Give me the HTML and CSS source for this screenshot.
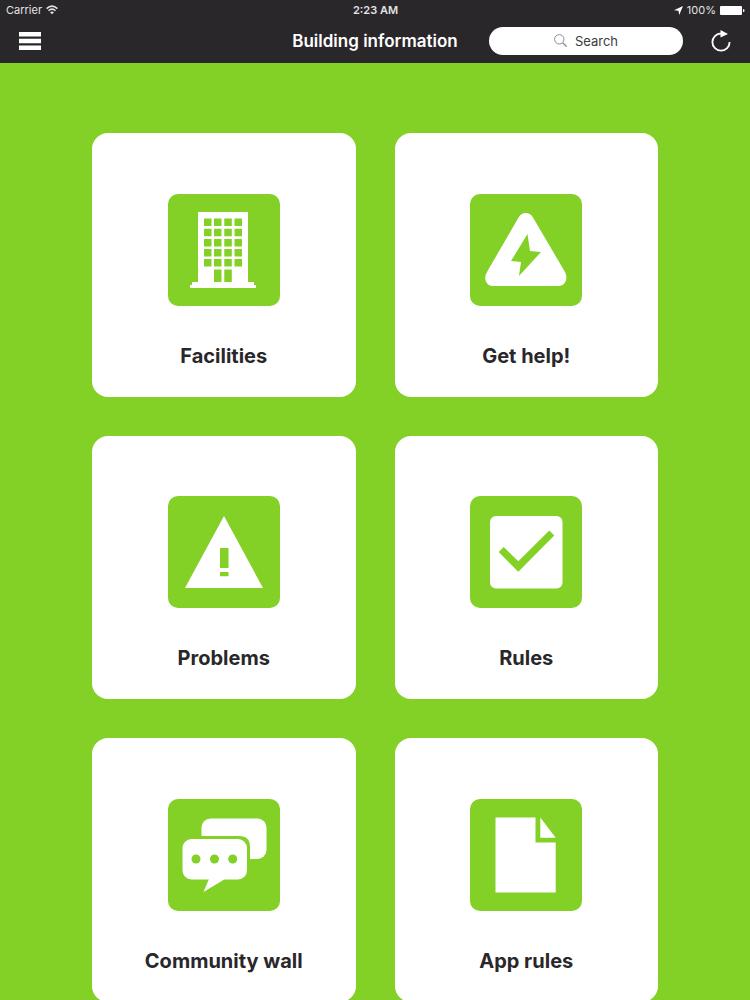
FILE: index.html
```html
<!DOCTYPE html>
<html lang="en">
<head>
<meta charset="UTF-8">
<meta name="viewport" content="width=device-width, initial-scale=1.0">
<title>Building information</title>
<link rel="stylesheet" href="styles.css">
</head>
<body>

<header class="header">
  <div class="status">
    <div class="status-left">
      <span>Carrier</span>
      <svg width="12" height="10" viewBox="0 0 12 10" fill="none" stroke="currentColor" stroke-width="1.5">
        <path d="M.6 3.6Q6-1.400 11.400 3.600M2.500 5.700Q6 2.500 9.500 5.700"/>
        <path d="M6 9.200L4 7.200Q6 5.600 8 7.200Z" fill="currentColor" stroke="none"/>
      </svg>
    </div>
    <span class="status-time">2:23 AM</span>
    <div class="status-right">
      <svg class="location" width="9" height="9" viewBox="0 0 8 8"><path d="M8 0L4.600 8L4 4.200L0 3.800Z"/></svg>
      <span>100%</span>
      <svg class="battery" width="25" height="9" viewBox="0 0 25 9"><rect width="22" height="9" rx="1"/><path d="M23 3Q24.500 3 24.500 4.500T23 6Z"/></svg>
    </div>
  </div>
  <div class="navbar">
    <button class="icon-button" type="button" aria-label="Menu">
      <svg width="22" height="18" viewBox="0 0 22 18" fill="currentColor"><path d="M0 0h22v4.500H0zM0 6.800h22v4.400H0zM0 13.500h22V18H0z"/></svg>
    </button>
    <h1 class="title">Building information</h1>
    <div class="tools">
      <label class="search">
        <svg width="13" height="13" viewBox="0 0 13 13" fill="none" stroke="currentColor"><circle cx="5.300" cy="5.300" r="4.700"/><path d="M8.700 8.700L12.600 12.600" stroke-width="1.400"/></svg>
        <input type="text" placeholder="Search" aria-label="Search">
      </label>
      <button class="icon-button" type="button" aria-label="Refresh">
        <svg width="20" height="22" viewBox="0 0 20 22" fill="none" stroke="currentColor" stroke-width="1.800"><path d="M11 3.500H10A8.600 8.600 0 1 0 18.600 12"/><path d="M9.500 0L17 4L9.500 7.500Z" fill="currentColor" stroke="none"/></svg>
      </button>
    </div>
  </div>
</header>

<main class="content">
  <nav class="grid">
    <a class="card" href="#facilities">
      <svg class="icon" viewBox="0 0 112 112">
        <path class="shape" d="M30 18H80V88H86V91H88V94H22V91H24V88H30Z"/>
        <path class="cutout" d="M36 24.500h7.500v7.500h-7.500zm10 0h7.500v7.500h-7.500zm10.300 0h7.500v7.500h-7.500zm10.200 0h7.500v7.500h-7.500zM36 34.700h7.500v7.500h-7.500zm10 0h7.500v7.500h-7.500zm10.300 0h7.500v7.500h-7.500zm10.200 0h7.500v7.500h-7.500zM36 44.900h7.500v7.500h-7.500zm10 0h7.500v7.500h-7.500zm10.300 0h7.500v7.500h-7.500zm10.200 0h7.500v7.500h-7.500zM36 55h7.500v7.500h-7.500zm10 0h7.500v7.500h-7.500zm10.300 0h7.500v7.500h-7.500zm10.200 0h7.500v7.500h-7.500zM36 65h7.500v7.500h-7.500zm10 0h7.500v7.500h-7.500zm10.300 0h7.500v7.500h-7.500zm10.200 0h7.500v7.500h-7.500zM46 75.500h7.500V88h-7.500zm10.300 0h7.500V88h-7.500z"/>
      </svg>
      <span class="label">Facilities</span>
    </a>
    <a class="card" href="#help">
      <svg class="icon" viewBox="0 0 112 112">
        <path class="shape" d="M48.500 23.500Q51 19 55.800 19T63 23.500L95 78Q97.500 83 95.500 87.500T88 92H23Q18 92 16 87.500T17 78Z"/>
        <path class="cutout" d="M57.500 40L41 67L51 68L49 82L71 58L60 57Z"/>
      </svg>
      <span class="label">Get help!</span>
    </a>
    <a class="card" href="#problems">
      <svg class="icon" viewBox="0 0 112 112">
        <path class="shape" d="M56 20L95 92H17Z"/>
        <path class="cutout" d="M52 52h8.500v20H52zM52 76h8.500v4.300H52z"/>
      </svg>
      <span class="label">Problems</span>
    </a>
    <a class="card" href="#rules">
      <svg class="icon" viewBox="0 0 112 112">
        <rect class="shape" x="20" y="20" width="72.500" height="72.500" rx="6"/>
        <path class="cutout" d="M28.700 56L33.700 51L48.300 65.200L79.300 34.500L84.300 39.500L48.300 75.800Z"/>
      </svg>
      <span class="label">Rules</span>
    </a>
    <a class="card" href="#community">
      <svg class="icon" viewBox="0 0 112 112">
        <rect class="shape" x="33.500" y="19.500" width="65" height="40.500" rx="9"/>
        <path class="cutout" d="M11 37H71Q82 37 82 48V83H11Z"/>
        <rect class="shape" x="14.500" y="40" width="64.500" height="40.500" rx="9"/>
        <path class="shape" d="M41 80L35.500 93L57 80Z"/>
        <circle class="cutout" cx="28" cy="60" r="4.500"/>
        <circle class="cutout" cx="46.500" cy="60" r="4.500"/>
        <circle class="cutout" cx="64.700" cy="60" r="4.500"/>
      </svg>
      <span class="label">Community wall</span>
    </a>
    <a class="card" href="#app-rules">
      <svg class="icon" viewBox="0 0 112 112">
        <path class="shape" d="M25.500 18.500H65.500V43.500H85.700V93.500H25.500ZM70.300 18.500L85.700 38.800H70.300Z"/>
      </svg>
      <span class="label">App rules</span>
    </a>
  </nav>
</main>

</body>
</html>
```
FILE: styles.css
```css
* {
  box-sizing: border-box;
}
body {
  display: flex;
  flex-direction: column;
  height: 100vh;
  margin: 0;
  font-family: Inter, sans-serif;
  background-color: #83d027;
}
svg {
  display: block;
  flex: none;
}
.header {
  flex: none;
  color: #fff;
  background-color: #2a272b;
}
.status,
.navbar {
  display: grid;
  grid-template-columns: 1fr auto 1fr;
  align-items: center;
}
.status {
  height: 20px;
  padding: 0 5px 0 6px;
  font-size: 11px;
  color: #e4e4e4;
}
.status-left,
.status-right {
  display: flex;
  align-items: center;
  gap: 4px;
}
.status-right {
  justify-content: flex-end;
}
.status-time {
  font-weight: 600;
}
.location,
.battery {
  fill: #fff;
}
.navbar {
  height: 43px;
  padding: 0 19px 2px;
}
.title {
  margin: 0;
  font-size: 17px;
  font-weight: 600;
}
.tools {
  display: flex;
  align-items: center;
  justify-content: flex-end;
  gap: 28px;
}
.icon-button {
  justify-self: start;
  padding: 0;
  border: none;
  color: #fff;
  background: none;
  cursor: pointer;
}
.search {
  display: flex;
  align-items: center;
  justify-content: center;
  gap: 8px;
  width: 194px;
  height: 28px;
  border-radius: 14px;
  color: #8e8e93;
  background-color: #fff;
}
.search input {
  field-sizing: content;
  max-width: 140px;
  padding: 0;
  border: none;
  outline: none;
  font: 13px Inter, sans-serif;
  color: #3c3a3e;
  background: none;
}
.search input::placeholder {
  color: #3c3a3e;
}
.content {
  flex: 1;
  min-height: 0;
  padding: 70px 92px;
  overflow-y: auto;
  scrollbar-width: none;
}
.grid {
  display: grid;
  grid-template-columns: 1fr 1fr;
  gap: 39px;
}
.card {
  display: flex;
  flex-direction: column;
  align-items: center;
  justify-content: center;
  gap: 37px;
  aspect-ratio: 1;
  padding-top: 33px;
  border-radius: 16px;
  color: #2a272b;
  background-color: #fff;
  text-decoration: none;
}
.icon {
  width: 112px;
  height: 112px;
  border-radius: 10px;
  background-color: #83d027;
}
.shape {
  fill: #fff;
}
.cutout {
  fill: #83d027;
}
.label {
  font-size: 20px;
  font-weight: 700;
  line-height: 26px;
}
```
